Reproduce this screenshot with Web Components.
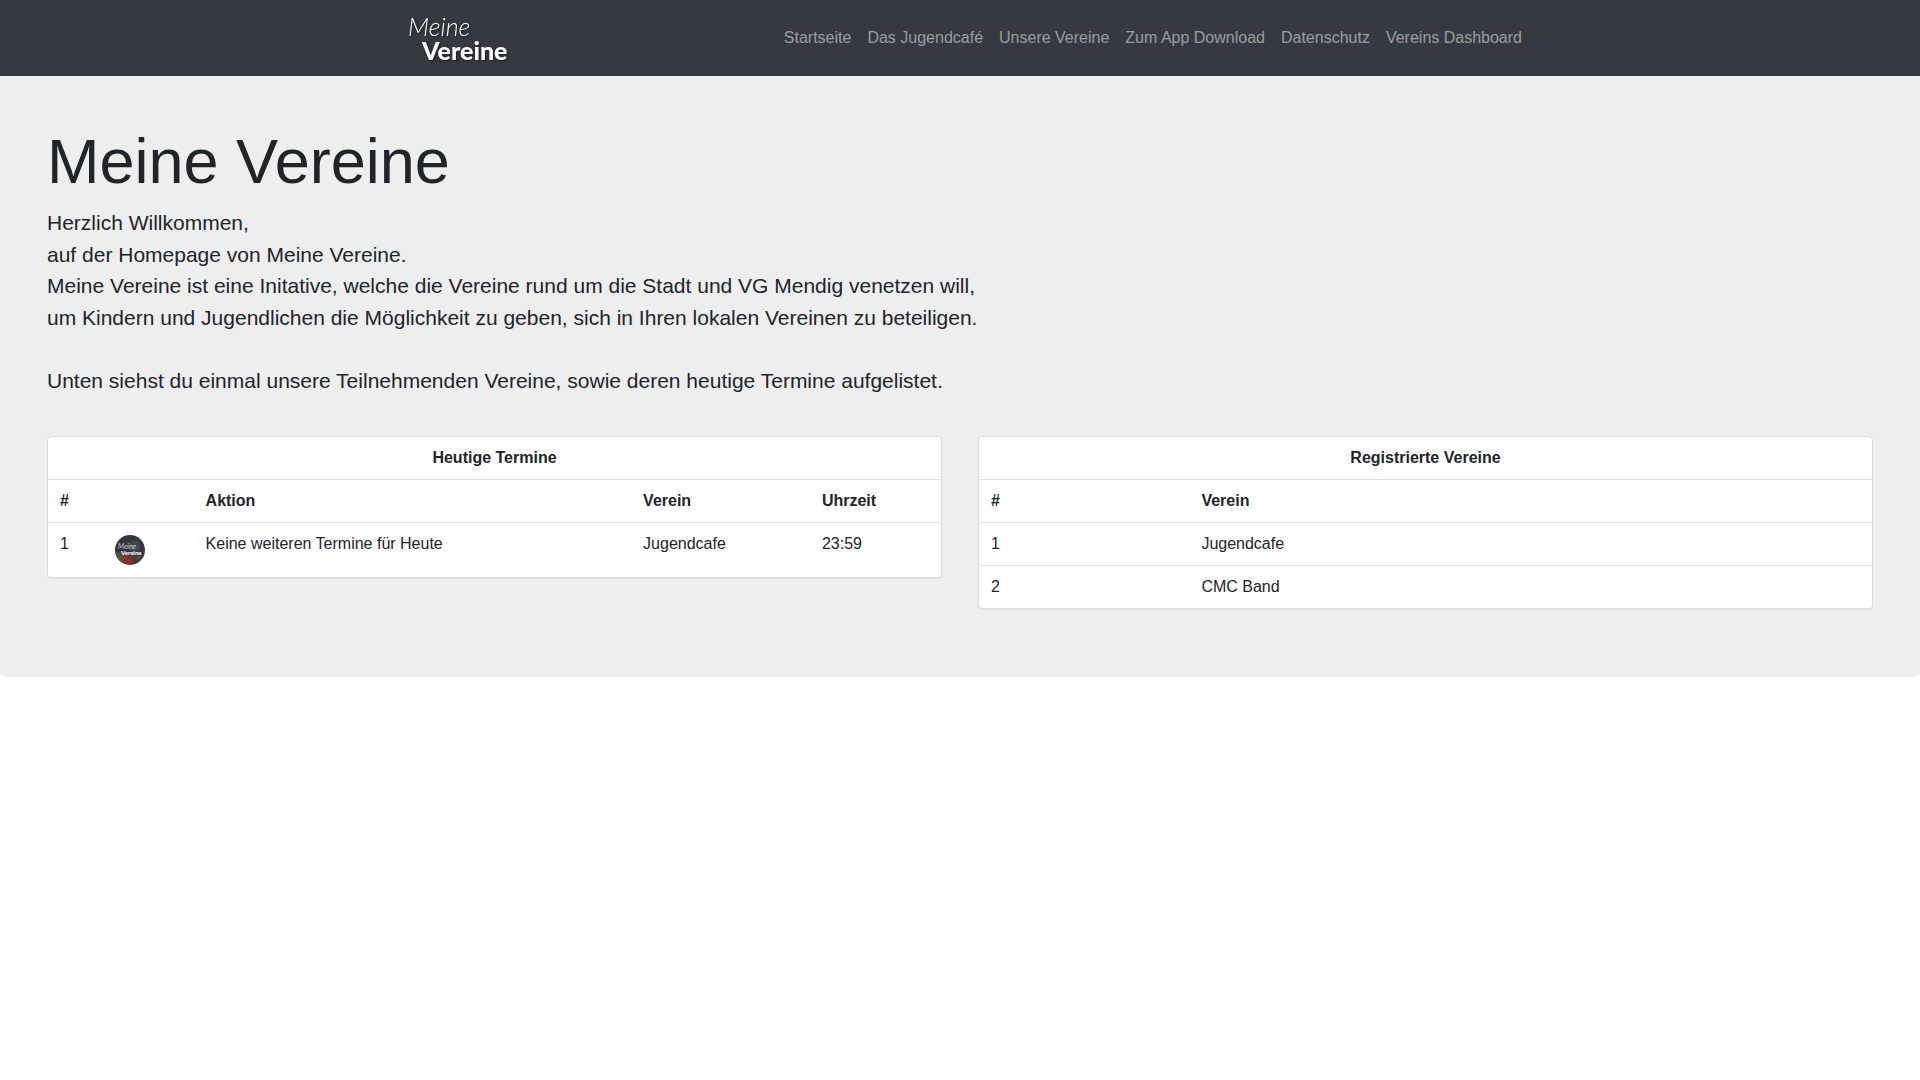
<!DOCTYPE html>
<html lang="de">
<head>
<meta charset="utf-8">
<meta name="viewport" content="width=device-width, initial-scale=1">
<title>Meine Vereine</title>
<style>
body {
    margin: 0;
    background-color: #fff;
    color: #212529;
    font-family: "Liberation Sans", Arial, sans-serif;
    font-size: 16px;
    text-rendering: optimizeSpeed;
}
</style>
</head>
<body>

<vereine-navbar>
    <vereine-logo slot="brand"></vereine-logo>
    <nav-link href="#start">Startseite</nav-link>
    <nav-link href="#jugendcafe">Das Jugendcafé</nav-link>
    <nav-link href="#vereine">Unsere Vereine</nav-link>
    <nav-link href="#download">Zum App Download</nav-link>
    <nav-link href="#datenschutz">Datenschutz</nav-link>
    <nav-link href="#dashboard">Vereins Dashboard</nav-link>
</vereine-navbar>

<vereine-jumbotron>
    <span slot="title">Meine Vereine</span>
    <span slot="text">Herzlich Willkommen,<br>
    auf der Homepage von Meine Vereine.<br>
    Meine Vereine ist eine Initative, welche die Vereine rund um die Stadt und VG Mendig venetzen will,<br>
    um Kindern und Jugendlichen die Möglichkeit zu geben, sich in Ihren lokalen Vereinen zu beteiligen.<br>
    <br>
    Unten siehst du einmal unsere Teilnehmenden Vereine, sowie deren heutige Termine aufgelistet.</span>
    <termine-table></termine-table>
    <vereins-table></vereins-table>
</vereine-jumbotron>

<script>
const navbarTmp = document.createElement('template');
navbarTmp.innerHTML = `
<style>
:host {
    display: block;
    background-color: #343a40;
}
.container {
    display: flex;
    align-items: center;
    justify-content: space-between;
    max-width: 1140px;
    min-height: 60px;
    margin: 0 auto;
    padding: 8px 0;
}
nav {
    display: flex;
    flex-wrap: wrap;
}
</style>
<header class="container">
  <slot name="brand"></slot>
  <nav aria-label="Hauptmenü"><slot></slot></nav>
</header>
`;

const linkTmp = document.createElement('template');
linkTmp.innerHTML = `
<style>
:host {
    display: block;
}
a {
    display: block;
    padding: 8px;
    line-height: 24px;
    color: rgba(255, 255, 255, .5);
    text-decoration: none;
}
a:hover {
    color: rgba(255, 255, 255, .75);
}
</style>
<a><slot></slot></a>
`;

const logoTmp = document.createElement('template');
logoTmp.innerHTML = `
<style>
:host {
    display: block;
}
a, svg {
    display: block;
}
svg {
    filter: drop-shadow(1px 1px 1px #00000080);
}
</style>
<a href="#start" aria-label="Meine Vereine">
  <svg width="140" height="60" viewBox="0 0 140 60" fill="#fff">
    <text x="18" y="28" font-family="Lato, sans-serif" font-size="25" font-style="italic" font-weight="300">Meine</text>
    <text x="32" y="52" font-family="Lato, sans-serif" font-size="25" font-weight="900">Vereine</text>
  </svg>
</a>
`;

const jumbotronTmp = document.createElement('template');
jumbotronTmp.innerHTML = `
<style>
:host {
    display: block;
    padding: 47px 47px 68px;
    background-color: #eee;
    border-radius: 0 0 6px 6px;
}
h1 {
    margin: 0 0 8px;
    font-size: 63px;
    font-weight: 400;
    line-height: 76px;
}
p {
    margin: 0 0 40px;
    font-size: 21px;
    line-height: 1.5;
}
.cards {
    display: grid;
    grid-template-columns: 1fr 1fr;
    align-items: start;
    gap: 36px;
}
</style>
<main>
  <h1><slot name="title"></slot></h1>
  <p><slot name="text"></slot></p>
  <div class="cards"><slot></slot></div>
</main>
`;

// shared by both tables
const tableStyle = `
<style>
:host {
    display: block;
    background-color: #fff;
    border: 1px solid #dcdcdf;
    border-radius: 4px;
    box-shadow: 0 1px 1px rgba(0, 0, 0, .05);
}
table {
    width: 100%;
    border-collapse: collapse;
}
th, td {
    padding: 12px;
    text-align: left;
    vertical-align: top;
    line-height: 18px;
}
tr + tr, tbody tr {
    border-top: 1px solid #dee2e6;
}
th[colspan] {
    text-align: center;
}
svg {
    display: block;
}
</style>
`;

const termineTmp = document.createElement('template');
termineTmp.innerHTML = tableStyle + `
<table>
  <thead>
    <tr><th colspan="5">Heutige Termine</th></tr>
    <tr><th>#</th><th></th><th>Aktion</th><th>Verein</th><th>Uhrzeit</th></tr>
  </thead>
  <tbody>
    <tr>
      <td>1</td>
      <td>
        <svg width="30" height="30" viewBox="0 0 30 30" role="img" aria-label="Meine Vereine">
          <defs>
            <clipPath id="round"><circle cx="15" cy="15" r="15"/></clipPath>
            <filter id="soft"><feGaussianBlur stdDeviation="1.2"/></filter>
          </defs>
          <g clip-path="url(#round)">
            <rect width="30" height="30" fill="#37343f"/>
            <g filter="url(#soft)">
              <path d="M12 8L24 5L25 15L15 16Z" fill="#3d5150"/>
              <path d="M0 17L10 19L16 25L11 28L0 25Z" fill="#77452f"/>
              <path d="M11 20L20 22L17 31L8 28Z" fill="#863033"/>
              <path d="M20 21L28 20L23 27Z" fill="#48533f"/>
              <path d="M1 17L8 18L8 22L3 22Z" fill="#3f5940"/>
            </g>
            <text x="3" y="14" font-family="Lato, sans-serif" font-size="7" font-style="italic" fill="#c8c9cb">Meine</text>
            <text x="6" y="20" font-family="Lato, sans-serif" font-size="6" font-weight="900" fill="#fff">Vereine</text>
          </g>
        </svg>
      </td>
      <td>Keine weiteren Termine für Heute</td>
      <td>Jugendcafe</td>
      <td>23:59</td>
    </tr>
  </tbody>
</table>
`;

const vereineTmp = document.createElement('template');
vereineTmp.innerHTML = tableStyle + `
<table>
  <thead>
    <tr><th colspan="2">Registrierte Vereine</th></tr>
    <tr><th>#</th><th>Verein</th></tr>
  </thead>
  <tbody>
    <tr><td>1</td><td>Jugendcafe</td></tr>
    <tr><td>2</td><td>CMC Band</td></tr>
  </tbody>
</table>
`;

class TemplateElement extends HTMLElement {

    constructor(template) {
      super();
      const shadowRoot = this.attachShadow({ mode: 'open' });
      shadowRoot.appendChild(template.content.cloneNode(true));
    }

}

class VereineNavbar extends TemplateElement {
    constructor() {
      super(navbarTmp);
    }
}

class NavLink extends TemplateElement {

    constructor() {
      super(linkTmp);
    }

    static get observedAttributes() {
      return ['href'];
    }

    attributeChangedCallback(name, oldValue, newValue) {
      this.shadowRoot.querySelector('a').setAttribute('href', newValue);
    }

}

class VereineLogo extends TemplateElement {
    constructor() {
      super(logoTmp);
    }
}

class VereineJumbotron extends TemplateElement {
    constructor() {
      super(jumbotronTmp);
    }
}

class TermineTable extends TemplateElement {
    constructor() {
      super(termineTmp);
    }
}

class VereinsTable extends TemplateElement {
    constructor() {
      super(vereineTmp);
    }
}

customElements.define('vereine-navbar', VereineNavbar);
customElements.define('nav-link', NavLink);
customElements.define('vereine-logo', VereineLogo);
customElements.define('vereine-jumbotron', VereineJumbotron);
customElements.define('termine-table', TermineTable);
customElements.define('vereins-table', VereinsTable);
</script>
</body>
</html>
